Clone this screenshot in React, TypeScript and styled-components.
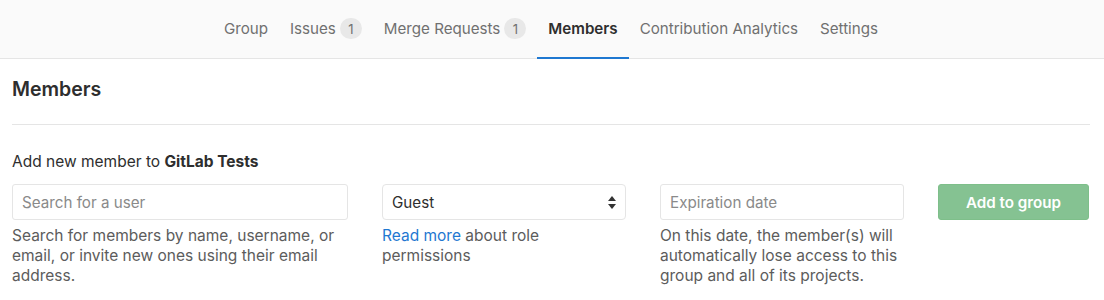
import React from "react";
import styled, { createGlobalStyle } from "styled-components";

const Global = createGlobalStyle`
  html, body { margin: 0; padding: 0; background: #fff; }
  body { font-family: Inter, "Noto Sans", "Liberation Sans", sans-serif; color: #2e2e2e; font-size: 15.5px; }
  * { box-sizing: border-box; }
`;

const NavBar = styled.nav`
  height: 59px;
  background: #fafafa;
  border-bottom: 1px solid #e5e5e5;
  display: flex;
  justify-content: center;
  padding-right: 2px;
`;

const NavItem = styled.a<{ $active?: boolean }>`
  display: flex;
  align-items: center;
  gap: 4px;
  padding: 0 11px;
  font-size: 15.15px;
  color: ${(p) => (p.$active ? "#2e2e2e" : "#707070")};
  font-weight: ${(p) => (p.$active ? 600 : 400)};
  border-bottom: 2px solid ${(p) => (p.$active ? "#1f78d1" : "transparent")};
  margin-bottom: -1px;
  text-decoration: none;
`;

const Badge = styled.span`
  display: inline-flex;
  align-items: center;
  justify-content: center;
  min-width: 22px;
  height: 21px;
  border-radius: 11px;
  background: #e8e8e8;
  color: #707070;
  font-size: 13px;
  font-weight: 400;
`;

const Content = styled.main`
  padding: 0 14px 0 12px;
`;

const Title = styled.h3`
  margin: 0;
  padding: 18px 0 23px;
  font-size: 19.5px;
  line-height: 24px;
  font-weight: 600;
  color: #2e2e2e;
  border-bottom: 1px solid #e5e5e5;
`;

const Label = styled.p`
  margin: 27px 0 12px;
  font-size: 15.5px;
  line-height: 20px;
  color: #2e2e2e;
`;

const Row = styled.div`
  display: grid;
  grid-template-columns: 336px 244px 244px 151px;
  column-gap: 34px;
  align-items: start;
`;

const Field = styled.div`
  display: flex;
  flex-direction: column;
`;

const Input = styled.input`
  height: 36px;
  border: 1px solid #e5e5e5;
  border-radius: 3px;
  padding: 0 9px;
  font-family: inherit;
  font-size: 15.2px;
  color: #2e2e2e;
  background: #fff;
  &::placeholder { color: #8a8a8a; }
`;

const SelectBox = styled.div`
  height: 36px;
  border: 1px solid #e5e5e5;
  border-radius: 4px;
  padding: 0 9px;
  display: flex;
  align-items: center;
  justify-content: space-between;
  font-size: 15.2px;
  color: #2e2e2e;
  background: #fff;
`;

const Help = styled.p`
  margin: 6px 0 0;
  font-size: 15.5px;
  line-height: 20px;
  color: #5c5c5c;
`;

const Link = styled.a`
  color: #1f78d1;
  text-decoration: none;
`;

const Button = styled.button`
  height: 36px;
  border: 1px solid #7ebf8a;
  border-radius: 3px;
  background: #85c292;
  color: #fff;
  font-family: inherit;
  font-size: 15.2px;
  font-weight: 600;
`;

const Arrows = () => (
  <svg width="8" height="13" viewBox="0 0 8 13">
    <path d="M4 0 L8 5 H0 Z" fill="#333" />
    <path d="M4 13 L8 8 H0 Z" fill="#333" />
  </svg>
);

export default function App() {
  return (
    <>
      <Global />
      <NavBar>
        <NavItem>Group</NavItem>
        <NavItem>
          Issues <Badge>1</Badge>
        </NavItem>
        <NavItem>
          Merge Requests <Badge>1</Badge>
        </NavItem>
        <NavItem $active>Members</NavItem>
        <NavItem>Contribution Analytics</NavItem>
        <NavItem>Settings</NavItem>
      </NavBar>
      <Content>
        <Title>Members</Title>
        <Label>
          Add new member to <b>GitLab Tests</b>
        </Label>
        <Row>
          <Field>
            <Input placeholder="Search for a user" />
            <Help>
              Search for members by name, username, or email, or invite new ones
              using their email address.
            </Help>
          </Field>
          <Field>
            <SelectBox>
              <span>Guest</span>
              <Arrows />
            </SelectBox>
            <Help>
              <Link>Read more</Link> about role permissions
            </Help>
          </Field>
          <Field>
            <Input placeholder="Expiration date" />
            <Help>
              On this date, the member(s) will automatically lose access to this
              group and all of its projects.
            </Help>
          </Field>
          <Button>Add to group</Button>
        </Row>
      </Content>
    </>
  );
}
